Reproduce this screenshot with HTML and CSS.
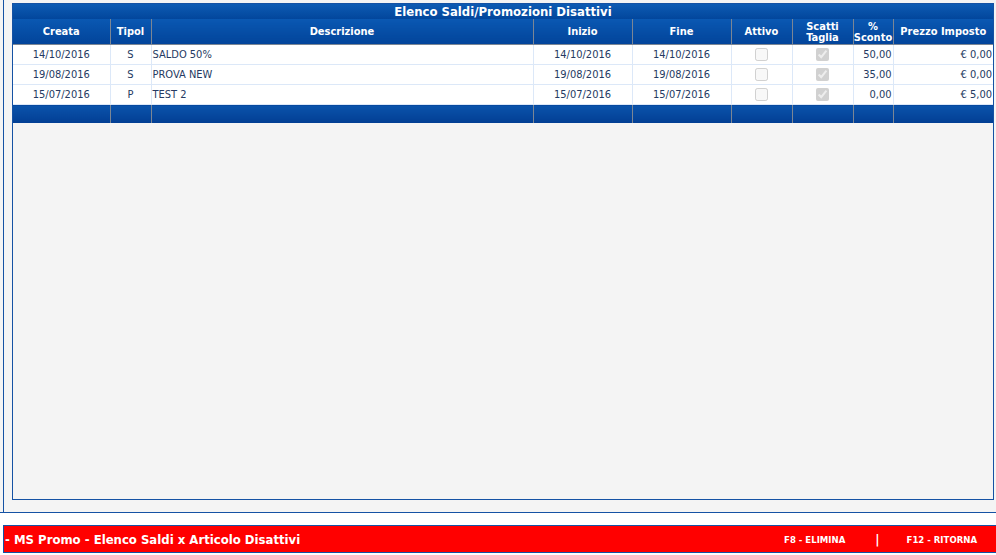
FILE: index.html
```html
<!DOCTYPE html>
<html lang="it">
<head>
  <meta charset="UTF-8" />
  <title>MS Promo - Elenco Saldi x Articolo Disattivi</title>
  <link rel="stylesheet" href="styles.css">
</head>
<body>
  <div class="page">
    <div class="frame">
      <div class="panel">
        <div class="panel-title">Elenco Saldi/Promozioni Disattivi</div>
        <table class="grid">
          <colgroup>
            <col style="width:97px"><col style="width:41px"><col style="width:382px">
            <col style="width:99px"><col style="width:99px"><col style="width:61px">
            <col style="width:61px"><col style="width:40px"><col>
          </colgroup>
          <thead>
            <tr>
              <th>Creata</th><th>Tipol</th><th>Descrizione</th><th>Inizio</th><th>Fine</th>
              <th>Attivo</th><th>Scatti Taglia</th><th>% Sconto</th><th>Prezzo Imposto</th>
            </tr>
          </thead>
          <tbody>
            <tr>
              <td class="c">14/10/2016</td><td class="c">S</td><td>SALDO 50%</td>
              <td class="c">14/10/2016</td><td class="c">14/10/2016</td>
              <td class="c"><input type="checkbox" disabled></td>
              <td class="c"><input type="checkbox" checked disabled></td>
              <td class="r">50,00</td><td class="r">€ 0,00</td>
            </tr>
            <tr>
              <td class="c">19/08/2016</td><td class="c">S</td><td>PROVA NEW</td>
              <td class="c">19/08/2016</td><td class="c">19/08/2016</td>
              <td class="c"><input type="checkbox" disabled></td>
              <td class="c"><input type="checkbox" checked disabled></td>
              <td class="r">35,00</td><td class="r">€ 0,00</td>
            </tr>
            <tr>
              <td class="c">15/07/2016</td><td class="c">P</td><td>TEST 2</td>
              <td class="c">15/07/2016</td><td class="c">15/07/2016</td>
              <td class="c"><input type="checkbox" disabled></td>
              <td class="c"><input type="checkbox" checked disabled></td>
              <td class="r">0,00</td><td class="r">€ 5,00</td>
            </tr>
          </tbody>
          <tfoot>
            <tr>
              <td></td><td></td><td></td><td></td><td></td><td></td><td></td><td></td><td></td>
            </tr>
          </tfoot>
        </table>
      </div>
    </div>
  </div>

  <div class="statusbar">
    <span class="status-title">- MS Promo - Elenco Saldi x Articolo Disattivi</span>
    <span class="keys">
      <span class="key">F8 - ELIMINA</span>
      <span class="sep">|</span>
      <span class="key">F12 - RITORNA</span>
    </span>
  </div>
</body>
</html>
```

FILE: styles.css
```css
body {
  margin: 0;
  background: #fff;
  font-family: "DejaVu Sans Condensed", "DejaVu Sans", sans-serif;
  font-size: 11px;
}
.page {
  height: 512px;
  background: #f4f4f4;
  border-bottom: 1px solid #1552a4;
}
.frame {
  height: 100%;
  margin-left: 3px;
  border-left: 1px solid #1552a4;
  padding: 3px 2px 0 8px;
  box-sizing: border-box;
}
.panel {
  height: 497px;
  border: 1px solid #1552a4;
  background: #f4f4f4;
  box-sizing: border-box;
}
.panel-title {
  height: 15px;
  line-height: 15px;
  text-align: center;
  color: #fff;
  font-weight: bold;
  font-size: 13px;
  background: linear-gradient(#0d5bb3, #02469c);
}
.grid {
  width: 100%;
  border-collapse: collapse;
  table-layout: fixed;
}
.grid th {
  height: 25px;
  padding: 0;
  color: #fff;
  font-weight: bold;
  font-size: 11px;
  line-height: 11px;
  background: linear-gradient(#0a58b2, #02449a);
  border: 1px solid #7b8694;
  border-top: none;
}
.grid th:first-child { border-left: none; }
.grid th:last-child { border-right: none; }
.grid tbody td {
  height: 19px;
  padding: 0 1px;
  color: #253a62;
  background: #fff;
  border: 1px solid #dce8f8;
  white-space: nowrap;
  overflow: hidden;
}
.grid tbody td:first-child { border-left: none; }
.grid tbody td:last-child { border-right: none; }
.grid .c { text-align: center; }
.grid .r { text-align: right; }
.grid input {
  margin: 0;
  width: 13px;
  height: 13px;
  vertical-align: middle;
}
.grid tfoot td {
  height: 18px;
  padding: 0;
  background: linear-gradient(#0a53ab, #023e93);
  border: 1px solid #7b8694;
  border-bottom: none;
}
.grid tfoot td:first-child { border-left: none; }
.grid tfoot td:last-child { border-right: none; }
.statusbar {
  margin: 12px 0 0 3px;
  height: 26px;
  background: #ff0000;
  border: 1px solid #1552a4;
  border-right: none;
  display: flex;
  align-items: center;
  justify-content: space-between;
  color: #fff;
  font-weight: bold;
}
.status-title {
  padding-left: 1px;
  font-size: 13px;
}
.keys {
  display: flex;
  align-items: center;
  font-size: 9.5px;
  padding-right: 19px;
}
.sep {
  font-size: 13px;
  margin: 0 27px 0 30px;
}
```
